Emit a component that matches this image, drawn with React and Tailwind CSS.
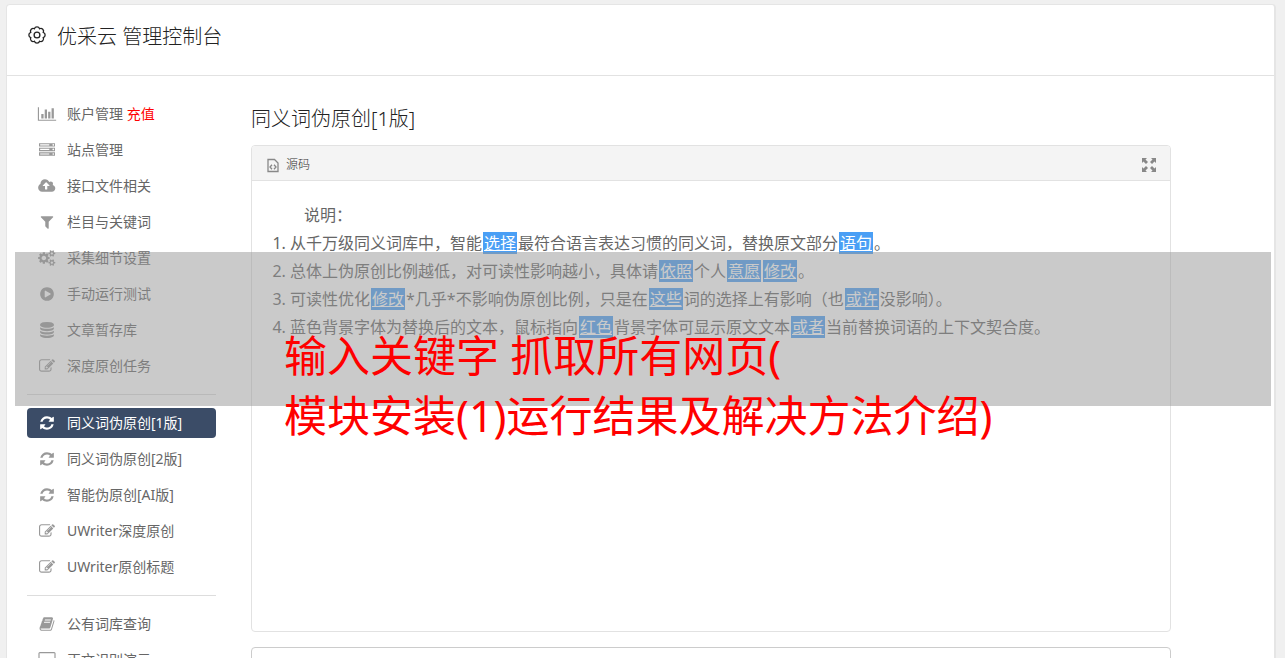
import React from 'react';

const iconPaths = {
  chart: 'M640 896v512h-256v-512h256zm384-512v1024h-256v-1024h256zm1024 1152v128h-2048v-1536h128v1408h1920zm-640-896v768h-256v-768h256zm384-384v1152h-256v-1152h256z',
  server: 'M128 1408h1024v-128h-1024v128zm0-512h1024v-128h-1024v128zm1568 448q0-40-28-68t-68-28-68 28-28 68 28 68 68 28 68-28 28-68zm-1568-960h1024v-128h-1024v128zm1568 448q0-40-28-68t-68-28-68 28-28 68 28 68 68 28 68-28 28-68zm0-512q0-40-28-68t-68-28-68 28-28 68 28 68 68 28 68-28 28-68zm96 832v384h-1792v-384h1792zm0-512v384h-1792v-384h1792zm0-512v384h-1792v-384h1792z',
  upload: 'M1216 864q0-14-9-23l-352-352q-9-9-23-9t-23 9l-351 351q-10 12-10 24 0 14 9 23t23 9h224v352q0 13 9.5 22.5t22.5 9.5h192q13 0 22.5-9.5t9.5-22.5v-352h224q13 0 22.5-9.5t9.5-22.5zm640 288q0 159-112.5 271.5t-271.5 112.5h-1088q-185 0-316.5-131.5t-131.5-316.5q0-130 70-240t188-165q-2-30-2-43 0-212 150-362t362-150q156 0 285.5 87t188.5 231q71-62 166-62 106 0 181 75t75 181q0 76-41 138 130 31 213.5 135.5t83.5 238.5z',
  filter: 'M1595 295q17 41-14 70l-493 493v742q0 42-39 59-13 5-25 5-27 0-45-19l-256-256q-19-19-19-45v-486l-493-493q-31-29-14-70 17-39 59-39h1280q42 0 59 39z',
  cogs: 'M832 896q0-106-75-181t-181-75-181 75-75 181 75 181 181 75 181-75 75-181zm768 512q0-52-38-90t-90-38-90 38-38 90q0 53 37.5 90.5t90.5 37.5 90.5-37.5 37.5-90.5zm0-1024q0-52-38-90t-90-38-90 38-38 90q0 53 37.5 90.5t90.5 37.5 90.5-37.5 37.5-90.5zm-384 421v185q0 10-7 19.5t-16 10.5l-155 24q-11 35-32 76 34 48 90 115 7 11 7 20 0 12-7 19-23 30-82.5 89.5t-78.5 59.5q-11 0-21-7l-115-90q-37 19-77 31-11 108-23 155-7 24-30 24h-186q-11 0-20-7.5t-10-17.5l-23-153q-34-10-75-31l-118 89q-7 7-20 7-11 0-21-8-144-133-144-160 0-9 7-19 10-14 41-53t47-61q-23-44-35-82l-152-24q-10-1-17-9.5t-7-19.5v-185q0-10 7-19.5t16-10.5l155-24q11-35 32-76-34-48-90-115-7-11-7-20 0-12 7-20 22-30 82-89t79-59q11 0 21 7l115 90q34-18 77-32 11-108 23-154 7-24 30-24h186q11 0 20 7.5t10 17.5l23 153q34 10 75 31l118-89q8-7 20-7 11 0 21 8 144 133 144 160 0 8-7 19-12 16-42 54t-45 60q23 48 34 82l152 23q10 2 17 10.5t7 19.5zm640 533v140q0 16-149 31-12 27-30 52 51 113 51 138 0 4-4 7-122 71-124 71-8 0-46-47t-52-68q-20 2-30 2t-30-2q-14 21-52 68t-46 47q-2 0-124-71-4-3-4-7 0-25 51-138-18-25-30-52-149-15-149-31v-140q0-16 149-31 13-29 30-52-51-113-51-138 0-4 4-7 4-2 35-20t59-34 30-16q8 0 46 46.500t52 67.500q20-2 30-2t30 2q51-71 92-112l6-2q4 0 124 70 4 3 4 7 0 25-51 138 17 23 30 52 149 15 149 31zm0-1024v140q0 16-149 31-12 27-30 52 51 113 51 138 0 4-4 7-122 71-124 71-8 0-46-47t-52-68q-20 2-30 2t-30-2q-14 21-52 68t-46 47q-2 0-124-71-4-3-4-7 0-25 51-138-18-25-30-52-149-15-149-31v-140q0-16 149-31 13-29 30-52-51-113-51-138 0-4 4-7 4-2 35-20t59-34 30-16q8 0 46 46.500t52 67.500q20-2 30-2t30 2q51-71 92-112l6-2q4 0 124 70 4 3 4 7 0 25-51 138 17 23 30 52 149 15 149 31z',
  play: 'M896 128q209 0 385.500 103t279.500 279.500 103 385.500-103 385.500-279.500 279.500-385.500 103-385.500-103-279.500-279.500-103-385.500 103-385.500 279.500-279.500 385.500-103zm384 823q32-18 32-55t-32-55l-544-320q-31-19-64-1-32 19-32 56v640q0 37 32 56 16 8 32 8 17 0 32-9z',
  database: 'M896 768q237 0 443-43t325-127v170q0 69-103 128t-280 93.500-385 34.500-385-34.500-280-93.500-103-128v-170q119 84 325 127t443 43zm0 768q237 0 443-43t325-127v170q0 69-103 128t-280 93.500-385 34.500-385-34.500-280-93.500-103-128v-170q119 84 325 127t443 43zm0-384q237 0 443-43t325-127v170q0 69-103 128t-280 93.500-385 34.500-385-34.500-280-93.500-103-128v-170q119 84 325 127t443 43zm0-1152q208 0 385 34.500t280 93.500 103 128v128q0 69-103 128t-280 93.500-385 34.500-385-34.500-280-93.500-103-128v-128q0-69 103-128t280-93.500 385-34.500z',
  edit: 'M888 1184l116-116-152-152-116 116v56h96v96h56zm440-720q-16-16-33 1l-350 350q-17 17-1 33t33-1l350-350q17-17 1-33zm80 594v190q0 119-84.500 203.500t-203.500 84.500h-832q-119 0-203.500-84.500t-84.500-203.500v-832q0-119 84.500-203.500t203.500-84.500h832q63 0 117 25 15 7 18 23 3 17-9 29l-49 49q-14 14-32 8-23-6-45-6h-832q-66 0-113 47t-47 113v832q0 66 47 113t113 47h832q66 0 113-47t47-113v-126q0-13 9-22l64-64q15-15 35-7t20 29zm-96-738l288 288-672 672h-288v-288zm444 132l-92 92-288-288 92-92q28-28 68-28t68 28l152 152q28 28 28 68t-28 68z',
  refresh: 'M1639 1056q0 5-1 7-64 268-268 434.500t-478 166.500q-146 0-282.500-55t-243.500-157l-129 129q-19 19-45 19t-45-19-19-45v-448q0-26 19-45t45-19h448q26 0 45 19t19 45-19 45l-137 137q71 66 161 102t187 36q134 0 250-65t186-179q11-17 53-117 8-23 30-23h192q13 0 22.500 9.500t9.500 22.500zm25-800v448q0 26-19 45t-45 19h-448q-26 0-45-19t-19-45 19-45l138-138q-148-137-349-137-134 0-250 65t-186 179q-11 17-53 117-8 23-30 23h-199q-13 0-22.500-9.500t-9.500-22.500v-7q65-268 270-434.500t480-166.500q146 0 284 55.500t245 156.500l130-129q19-19 45-19t45 19 19 45z',
  book: 'M1703 478q40 57 18 129l-275 906q-19 64-76.500 107.500t-122.500 43.500h-923q-77 0-148.500-53.500t-99.500-131.500q-24-67-2-127 0-4 3-27t4-37q1-8-3-21.500t-3-19.500q2-11 8-21t16.500-23.500 16.500-23.500q23-38 45-91.500t30-91.500q3-10 .5-30t-.5-28q3-11 17-28t17-23q21-36 42-92t25-90q1-9-2.500-32t.5-28q4-13 22-30.500t22-22.500q19-26 42.500-84.500t27.500-96.500q1-8-3-25.500t-2-26.500q2-8 9-18t18-23 17-21q8-12 16.500-30.500t15-35 16-36 19.500-32 26.500-23.500 36-11.500 47.500 5.500l-1 3q38-9 51-9h761q74 0 114 56t18 130l-274 906q-36 119-71.500 153.500t-128.500 34.500h-869q-27 0-38 15-11 16-1 43 24 70 144 70h923q29 0 56-15.500t35-41.500l300-987q7-22 5-57 38 15 59 43zm-1064 2q-4 13 2 22.500t20 9.500h608q13 0 25.500-9.500t16.500-22.500l21-64q4-13-2-22.500t-20-9.500h-608q-13 0-25.500 9.500t-16.500 22.500zm-83 256q-4 13 2 22.500t20 9.500h608q13 0 25.500-9.500t16.500-22.500l21-64q4-13-2-22.500t-20-9.500h-608q-13 0-25.500 9.500t-16.500 22.500z',
  desktop: 'M1792 992v-832q0-13-9.500-22.500t-22.500-9.500h-1600q-13 0-22.500 9.500t-9.500 22.500v832q0 13 9.500 22.500t22.500 9.500h1600q13 0 22.500-9.500t9.500-22.500zm128-832v1088q0 66-47 113t-113 47h-544q0 37 16 77.500t32 71 16 43.500q0 26-19 45t-45 19h-512q-26 0-45-19t-19-45q0-14 16-44t32-70 16-78h-544q-66 0-113-47t-47-113v-1088q0-66 47-113t113-47h1600q66 0 113 47t47 113z',
};

const iconWidths = { chart: 2048, upload: 1856, cogs: 1856, desktop: 1920 };

const menuGroups = [
  [
    { icon: 'chart', label: '账户管理', extra: '充值' },
    { icon: 'server', label: '站点管理' },
    { icon: 'upload', label: '接口文件相关' },
    { icon: 'filter', label: '栏目与关键词' },
    { icon: 'cogs', label: '采集细节设置' },
    { icon: 'play', label: '手动运行测试' },
    { icon: 'database', label: '文章暂存库' },
    { icon: 'edit', label: '深度原创任务' },
  ],
  [
    { icon: 'refresh', label: '同义词伪原创[1版]', active: true },
    { icon: 'refresh', label: '同义词伪原创[2版]' },
    { icon: 'refresh', label: '智能伪原创[AI版]' },
    { icon: 'edit', label: 'UWriter深度原创' },
    { icon: 'edit', label: 'UWriter原创标题' },
  ],
  [
    { icon: 'book', label: '公有词库查询' },
    { icon: 'desktop', label: '正文识别演示' },
  ],
];

function MenuIcon({ name }) {
  return (
    <svg className="h-4 w-5 shrink-0" viewBox={`0 0 ${iconWidths[name] || 1792} 1792`} fill="currentColor" aria-hidden="true">
      <path d={iconPaths[name]} />
    </svg>
  );
}

function MenuItem({ item }) {
  return (
    <li>
      <a
        href="#"
        className={
          item.active
            ? 'flex h-[30px] items-center gap-2.5 rounded bg-[#3b4c67] pl-2.5 text-white'
            : 'flex h-[30px] items-center gap-2.5 rounded pl-2.5 text-[#999]'
        }
      >
        <MenuIcon name={item.icon} />
        <span className={item.active ? 'text-white' : 'text-[#666]'}>
          {item.label}
          {item.extra && <span className="text-[#f00]"> {item.extra}</span>}
        </span>
      </a>
    </li>
  );
}

function Mark({ children }) {
  return <span className="mx-px bg-[#4a9ff5] px-px text-white underline">{children}</span>;
}

function GearIcon() {
  return (
    <svg className="size-5" viewBox="0 0 20 20" fill="none" stroke="currentColor" strokeWidth="1.3" aria-hidden="true">
      <path d="M7.4 3.72A2.75 2.75 0 0 1 12.6 3.72A2.75 2.75 0 0 1 16.28 7.4A2.75 2.75 0 0 1 16.28 12.6A2.75 2.75 0 0 1 12.6 16.28A2.75 2.75 0 0 1 7.4 16.28A2.75 2.75 0 0 1 3.72 12.6A2.75 2.75 0 0 1 3.72 7.4A2.75 2.75 0 0 1 7.4 3.72Z" />
      <circle cx="10" cy="10" r="2.9" />
    </svg>
  );
}

function Editor() {
  return (
    <div className="h-[487px] overflow-hidden rounded border border-[#e2e2e2]">
      <div className="flex h-[35px] items-center justify-between border-b border-[#e2e2e2] bg-[#f4f4f4] px-3.5 pt-[3px] text-[#333]">
        <button type="button" className="flex items-center gap-1.5 text-xs">
          <svg className="h-4 w-3.5" viewBox="0 0 14 16" fill="none" stroke="#888" strokeWidth="1.3" aria-hidden="true">
            <path d="M2 2.5h6.500l3.500 3.500v8.500H2z" />
            <path d="M6 7.800L4 10l2 2.200M8 7.800L10 10l-2 2.200" />
          </svg>
          源码
        </button>
        <button type="button" aria-label="全屏">
          <svg className="size-3.5" viewBox="0 0 14 14" fill="#888" aria-hidden="true">
            <path d="M0 0h5L3.500 1.500 6 4 4 6 1.500 3.500 0 5zM14 0v5l-1.500-1.500L10 6 8 4l2.500-2.500L9 0zM0 14V9l1.500 1.500L4 8l2 2-2.500 2.500L5 14zM14 14H9l1.500-1.500L8 10l2-2 2.500 2.500L14 9z" />
          </svg>
        </button>
      </div>
      <div className="px-5 pt-5 text-base leading-7 font-normal text-[#666]">
        <p className="pl-8">说明：</p>
        <ol className="list-decimal pl-[18px]">
          <li>从千万级同义词库中，智能<Mark>选择</Mark>最符合语言表达习惯的同义词，替换原文部分<Mark>语句</Mark>。</li>
          <li>总体上伪原创比例越低，对可读性影响越小，具体请<Mark>依照</Mark>个人<Mark>意愿</Mark><Mark>修改</Mark>。</li>
          <li>可读性优化<Mark>修改</Mark>*几乎*不影响伪原创比例，只是在<Mark>这些</Mark>词的选择上有影响（也<Mark>或许</Mark>没影响）。</li>
          <li>蓝色背景字体为替换后的文本，鼠标指向<Mark>红色</Mark>背景字体可显示原文文本<Mark>或者</Mark>当前替换词语的上下文契合度。</li>
        </ol>
      </div>
    </div>
  );
}

function App() {
  return (
    <div className="relative h-screen overflow-hidden bg-[#f0f0f0] px-1.5 pt-1 pr-[9px] font-['Noto_Sans','Noto_Sans_CJK_SC',sans-serif] font-light">
      <div className="min-h-full rounded border border-r-2 border-[#e5e5e5] bg-white">
        <header className="flex h-[71px] items-start gap-2.5 border-b border-[#e2e2e2] px-5 pt-5 text-[#222]">
          <GearIcon />
          <h1 className="text-xl leading-6">优采云 管理控制台</h1>
        </header>

        <div className="flex gap-[35px] px-5 pt-[23px]">
          <nav className="w-[189px] shrink-0 text-sm font-normal">
            {menuGroups.map((group, i) => (
              <ul
                key={i}
                className={i > 0 ? 'mt-[13px] flex flex-col gap-1.5 border-t border-[#ddd] pt-[13px]' : 'flex flex-col gap-1.5'}
              >
                {group.map((item) => (
                  <MenuItem key={item.label} item={item} />
                ))}
              </ul>
            ))}
          </nav>

          <main className="max-w-[920px] flex-1 pt-2">
            <h2 className="mb-3.5 text-xl leading-6 text-[#222]">同义词伪原创[1版]</h2>
            <Editor />
            <textarea aria-label="内容" className="mt-[15px] block h-24 w-full rounded border border-[#ccc]" />
          </main>
        </div>
      </div>

      <div className="absolute top-[252px] right-3.5 left-[15px] h-[154px] bg-[#969696]/50" />
      <p className="absolute top-[326px] left-[284px] text-[43px] leading-[60px] font-normal text-[#f00]">
        输入关键字 抓取所有网页(
        <br />
        模块安装(1)运行结果及解决方法介绍)
      </p>
    </div>
  );
}

export default App;
